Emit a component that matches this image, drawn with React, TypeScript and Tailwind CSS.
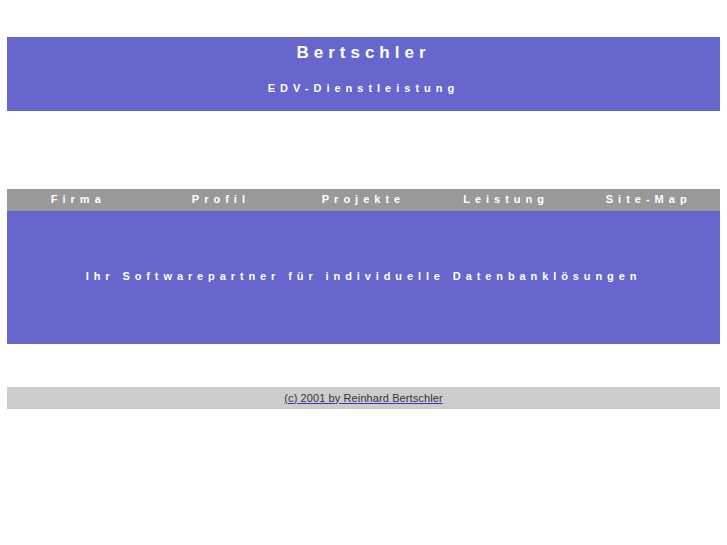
export default function App() {
  const nav = ["Firma", "Profil", "Projekte", "Leistung", "Site-Map"];
  return (
    <div className="min-h-[545px] bg-white pt-[37px] px-[7px] font-['Liberation_Sans',Arial,sans-serif]">
      <header className="h-[74px] bg-[#6666cc] flex flex-col items-center text-white font-bold">
        <div className="mt-[6px] text-[17px] leading-[20px] tracking-[5px]">Bertschler</div>
        <div className="mt-[19px] text-[11px] leading-[13px] tracking-[5px]">EDV-Dienstleistung</div>
      </header>

      <nav className="mt-[78px] h-[22px] bg-[#999999] grid grid-cols-5 items-center text-white font-bold text-[11px] tracking-[5px]">
        {nav.map((n) => (
          <a key={n} className="text-center leading-[13px] -mt-[1px]">
            {n}
          </a>
        ))}
      </nav>

      <section className="h-[133px] bg-[#6666cc] flex justify-center text-white font-bold text-[11px] tracking-[4.9px]">
        <p className="mt-[59px] leading-[13px]">Ihr Softwarepartner für individuelle Datenbanklösungen</p>
      </section>

      <footer className="mt-[43px] h-[22px] bg-[#cccccc] flex items-center justify-center text-[11px]">
        <a className="text-[#333333] underline decoration-[#3333cc] leading-[13px] tracking-[0.1px]">(c) 2001 by Reinhard Bertschler</a>
      </footer>
    </div>
  );
}
